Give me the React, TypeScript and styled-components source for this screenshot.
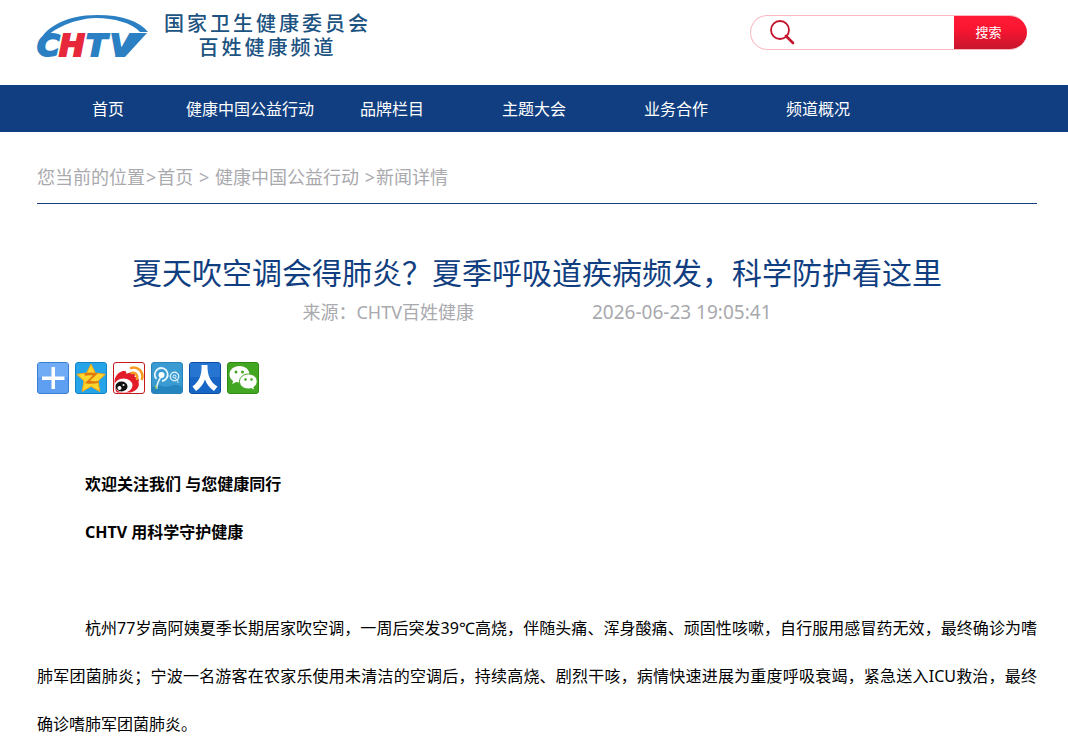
import React from "react";
import styled, { createGlobalStyle } from "styled-components";

const GlobalStyle = createGlobalStyle`
  * { box-sizing: border-box; }
  body {
    margin: 0;
    background: #fff;
    color: #000;
    font-family: "Noto Sans", "Noto Sans CJK SC", sans-serif;
    font-size: 16px;
  }
  a { color: inherit; text-decoration: none; }
`;

const Header = styled.header`
  display: flex;
  justify-content: space-between;
  align-items: flex-start;
  height: 85px;
  padding: 12px 41px 0 36px;
`;

const Brand = styled.a`
  display: flex;
  gap: 12px;
  color: #1c5381;
`;

const BrandName = styled.span`
  display: flex;
  flex-direction: column;
  align-items: center;
  font-size: 20px;
  font-weight: 500;
  line-height: 24px;
  letter-spacing: 3px;
`;

const SearchForm = styled.form`
  display: flex;
  align-items: center;
  width: 277px;
  height: 35px;
  margin-top: 3px;
  padding-left: 19px;
  border: 1px solid #f9b9bf;
  border-right: 0;
  border-radius: 18px;
  overflow: hidden;
`;

const SearchInput = styled.input`
  flex: 1;
  min-width: 0;
  height: 33px;
  padding: 0 8px;
  border: 0;
  outline: 0;
  background: transparent;
  font: inherit;
`;

const SearchButton = styled.button`
  width: 73px;
  height: 35px;
  padding: 0 4px 2px 0;
  flex-shrink: 0;
  border: 0;
  background: linear-gradient(#ff1a36, #fa1531 40%, #c3162c);
  color: #fff;
  font: inherit;
  font-size: 13px;
`;

const Nav = styled.nav`
  background: #103e80;
  padding: 1px 0 0 37px;
`;

const NavList = styled.ul`
  display: flex;
  margin: 0;
  padding: 0;
  list-style: none;
`;

const NavItem = styled.li`
  width: 142px;
  height: 46px;
  color: #fff;
  line-height: 47px;
  text-align: center;
  white-space: nowrap;
`;

const Main = styled.main`
  padding: 24px 31px 0 37px;
`;

const Breadcrumb = styled.div`
  height: 48px;
  border-bottom: 1px solid #103e80;
  color: #a9a9ae;
  font-size: 18px;
  line-height: 42px;
  white-space: pre;
`;

const Separator = styled.span`
  padding: 0 1px;
`;

const Title = styled.h1`
  margin: 49px 0 0;
  color: #103e80;
  font-size: 30px;
  font-weight: 400;
  line-height: 40px;
  text-align: center;
`;

const Meta = styled.div`
  display: flex;
  justify-content: center;
  gap: 118px;
  height: 38px;
  color: #a9a9ae;
  font-size: 18px;
  line-height: 38px;
`;

const PublishTime = styled.time`
  font-size: 19px;
`;

const ShareBar = styled.div`
  display: flex;
  gap: 6px;
  margin-top: 31px;
`;

const ShareLink = styled.a`
  display: block;
  width: 32px;
  height: 32px;
  svg { display: block; }
`;

const Article = styled.article`
  margin-top: 66px;
  line-height: 48px;
`;

const Paragraph = styled.p<{ $strong?: boolean }>`
  min-height: 48px;
  margin: 0;
  font-weight: ${(p) => (p.$strong ? 700 : 400)};
  text-indent: 48px;
  text-align: justify;
`;

const Logo = () => (
  <svg width="116" height="56" viewBox="0 0 116 56" aria-label="CHTV">
    <path d="M2 34C6 16 30 3 61 3c25 0 42 6 51 17h-8C96 11 78 6 60 6 34 7 13 19 5 31Z" fill="#2b7fc3" />
    <path d="M99 21h12L89 45H79Z" fill="#2b7fc3" />
    <g fontFamily="DejaVu Sans, sans-serif" fontWeight="700" fontStyle="italic" fontSize="31" strokeWidth="2">
      <text x="1" y="44" fill="#2b7fc3" stroke="#2b7fc3">C</text>
      <text x="23" y="44" fill="#e7273a" stroke="#e7273a">H</text>
      <text x="50" y="44" fill="#2b7fc3" stroke="#2b7fc3">T</text>
      <text x="74" y="44" fill="#2b7fc3" stroke="#2b7fc3">V</text>
    </g>
  </svg>
);

const SearchIcon = () => (
  <svg width="26" height="26" viewBox="0 0 26 26" fill="none" stroke="#c4142b" aria-hidden="true">
    <circle cx="10" cy="10" r="9" strokeWidth="1.800" />
    <path d="m16 16 7 7" strokeWidth="2.600" strokeLinecap="round" />
  </svg>
);

const Tile = ({ fill, edge, children }: { fill: string; edge: string; children: React.ReactNode }) => (
  <svg width="32" height="32" viewBox="0 0 32 32" aria-hidden="true">
    <rect x=".5" y=".5" width="31" height="31" rx="2.500" fill={fill} stroke={edge} />
    {children}
  </svg>
);

const shares = [
  {
    label: "更多分享",
    icon: (
      <Tile fill="#5e9ff2" edge="#3b7fd0">
        <path d="M1 1h30v14H1z" fill="#7db4f7" opacity=".6" />
        <path d="M14.500 5h3.500v9.500h9.500V18H18v9h-3.500v-9H5v-3.500h9.500Z" fill="#fff" />
      </Tile>
    ),
  },
  {
    label: "QQ空间",
    icon: (
      <Tile fill="#25a4ea" edge="#1483c4">
        <path d="m16 2 4.300 9 10 1.300-7.300 6.700 1.900 10.500L16 24.500 7.100 29.500 9 19l-7.300-6.700 10-1.300Z" fill="#ffd62e" stroke="#f5a512" />
        <path d="M9.500 11.500c4-1.300 9-1.300 13.500-.3L15 18.800c2.800.6 5.200.5 8 .1l.3 2.200c-4.300 1-9 .9-13.500.1l8-7.800c-2.500-.4-5.300-.3-8 .3Z" fill="#e07a10" />
      </Tile>
    ),
  },
  {
    label: "新浪微博",
    icon: (
      <Tile fill="#fff" edge="#c8161d">
        <path d="M1.500 20c0-5 3-9 7-10.500 3-1.500 5-.5 5 2.500 3-2 7-2 8 0 1 1 0 2 0 3 4 0 5 2 4 5 1.500 5-2 9-8 10.500H4c-2-2-2.500-6-2.500-10.500Z" fill="#e31c2a" />
        <ellipse cx="10.500" cy="23.500" rx="9" ry="7" fill="#fff" />
        <ellipse cx="8.500" cy="24.500" rx="6" ry="5" fill="#111" />
        <circle cx="6.500" cy="26" r="2" fill="#fff" />
        <circle cx="10.500" cy="23" r="1" fill="#fff" />
        <path d="M18.500 11c4-1 6.500 2 5.500 6M18 6c7-2 13 4 11 11" fill="none" stroke="#f59a23" strokeWidth="2.600" strokeLinecap="round" />
      </Tile>
    ),
  },
  {
    label: "腾讯微博",
    icon: (
      <Tile fill="#3a9bd3" edge="#2a82b8">
        <path d="M1 25c7-5 11 2 18-1 5-2 9-1 12 1v6H1Z" fill="#2585bf" />
        <path d="M5.500 17A6.500 6.500 0 1 1 11 19" fill="none" stroke="#e9f6fb" strokeWidth="1.800" />
        <circle cx="10.500" cy="13" r="3" fill="#fff" />
        <path d="M10 15c-3 4-4 7-4.500 12" fill="none" stroke="#f1faf3" strokeWidth="1.500" />
        <path d="M5.500 27c0-2-1-3-2-3" fill="none" stroke="#9dd84b" strokeWidth="1.200" />
        <circle cx="23.500" cy="14.500" r="4.200" fill="none" stroke="#d5edf7" strokeWidth="1.400" />
        <circle cx="23.500" cy="14.500" r="1.500" fill="none" stroke="#fff" />
        <path d="M24 16c2 1 3 3 3 5" fill="none" stroke="#d5edf7" />
      </Tile>
    ),
  },
  {
    label: "人人网",
    icon: (
      <Tile fill="#1766c5" edge="#0d4ea3">
        <path d="M1 1h30v14H1z" fill="#2f7fd9" opacity=".6" />
        <path d="M12.500 3h6c-.3 10 2.500 17 10 21.500L25 29c-4.500-3-7.500-7-9-11.500C14.500 22 11.500 26 7 29l-3.500-4.500C10.500 19 13 13 12.500 3Z" fill="#fff" />
      </Tile>
    ),
  },
  {
    label: "微信",
    icon: (
      <Tile fill="#43a622" edge="#2f8a13">
        <path d="M12.500 4C6.500 4 2.500 7.800 2.500 12.500c0 2.700 1.400 5 3.700 6.500L5.200 22l4-1.900c1 .3 2.200.5 3.300.5 6 0 10-3.600 10-8.100S18.500 4 12.500 4Z" fill="#fff" />
        <path d="M21.500 12c-5 0-9 3.200-9 7.500s4 7.500 9 7.500c1 0 2-.1 2.800-.4l3.400 1.800-.9-3.100c2.100-1.400 3.400-3.400 3.400-5.800 0-4.300-3.700-7.500-8.700-7.500Z" fill="#fff" stroke="#43a622" />
        <g fill="#43a622">
          <circle cx="9" cy="10" r="1.500" /><circle cx="15.500" cy="10" r="1.500" />
          <circle cx="18.500" cy="17.500" r="1.300" /><circle cx="24.500" cy="17.500" r="1.300" />
        </g>
      </Tile>
    ),
  },
];

const navItems = ["首页", "健康中国公益行动", "品牌栏目", "主题大会", "业务合作", "频道概况"];

export default function App() {
  return (
    <>
      <GlobalStyle />
      <Header>
        <Brand href="#">
          <Logo />
          <BrandName>
            <span>国家卫生健康委员会</span>
            <span>百姓健康频道</span>
          </BrandName>
        </Brand>
        <SearchForm role="search" onSubmit={(e) => e.preventDefault()}>
          <SearchIcon />
          <SearchInput type="text" aria-label="搜索内容" />
          <SearchButton type="submit">搜索</SearchButton>
        </SearchForm>
      </Header>
      <Nav>
        <NavList>
          {navItems.map((item) => (
            <NavItem key={item}><a href="#">{item}</a></NavItem>
          ))}
        </NavList>
      </Nav>
      <Main>
        <Breadcrumb>
          您当前的位置<Separator>&gt;</Separator><a href="#">首页</a> <Separator>&gt;</Separator> <a href="#">健康中国公益行动</a> <Separator>&gt;</Separator>新闻详情
        </Breadcrumb>
        <Title>夏天吹空调会得肺炎？夏季呼吸道疾病频发，科学防护看这里</Title>
        <Meta>
          <span>来源：CHTV百姓健康</span>
          <PublishTime dateTime="2026-06-23T19:05:41">2026-06-23 19:05:41</PublishTime>
        </Meta>
        <ShareBar>
          {shares.map((s) => (
            <ShareLink key={s.label} href="#" aria-label={s.label}>{s.icon}</ShareLink>
          ))}
        </ShareBar>
        <Article>
          <Paragraph $strong>欢迎关注我们 与您健康同行</Paragraph>
          <Paragraph $strong>CHTV 用科学守护健康</Paragraph>
          <Paragraph />
          <Paragraph>
            杭州77岁高阿姨夏季长期居家吹空调，一周后突发39℃高烧，伴随头痛、浑身酸痛、顽固性咳嗽，自行服用感冒药无效，最终确诊为嗜肺军团菌肺炎；宁波一名游客在农家乐使用未清洁的空调后，持续高烧、剧烈干咳，病情快速进展为重度呼吸衰竭，紧急送入ICU救治，最终确诊嗜肺军团菌肺炎。
          </Paragraph>
        </Article>
      </Main>
    </>
  );
}
